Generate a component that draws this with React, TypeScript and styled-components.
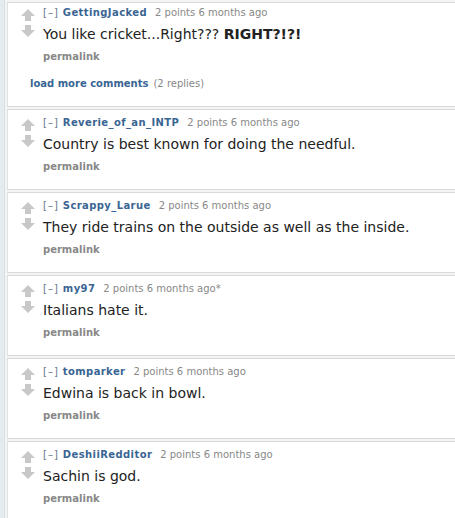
import React from 'react';
import styled, { createGlobalStyle } from 'styled-components';

const GlobalStyle = createGlobalStyle`
  html, body {
    margin: 0;
    padding: 0;
    background: #ffffff;
  }
  body {
    font-family: Verdana, "DejaVu Sans", sans-serif;
  }
`;

const Thread = styled.div`
  width: 455px;
  height: 518px;
  overflow: hidden;
  display: flex;
  background: #ffffff;
`;

const Rail = styled.div`
  width: 4px;
  flex: none;
  background: #e4ecef;
  border-right: 1px solid #d8e0e3;
`;

const List = styled.div`
  flex: 1;
  display: flex;
  flex-direction: column;
  gap: 2px;
  padding-top: 2px;
  padding-left: 2px;
  background: #f3f4f5;
`;

const Comment = styled.div<{ $first?: boolean }>`
  display: flex;
  background: #ffffff;
  border-top: 1px solid #d9d9d9;
  border-bottom: 1px solid #d9d9d9;
  border-left: 1px solid #e2e2e2;
  padding: ${(p) => (p.$first ? '3px' : '6px')} 0 15px 13px;
`;

const Votes = styled.div`
  width: 14px;
  flex: none;
  display: flex;
  flex-direction: column;
  align-items: center;
  gap: 4px;
  padding-top: 3px;
  margin-right: 8px;
`;

const Entry = styled.div`
  display: flex;
  flex-direction: column;
`;

const Tagline = styled.div`
  font-size: 10px;
  line-height: 14px;
  color: #888888;
  white-space: nowrap;
`;

const Expand = styled.span`
  color: #65758a;
  letter-spacing: 1px;
  margin-right: 4px;
`;

const Author = styled.span`
  color: #3a6593;
  font-weight: bold;
  letter-spacing: 0.4px;
  margin-right: 8px;
`;

const Body = styled.div`
  font-size: 14px;
  line-height: 20px;
  color: #222222;
  margin-top: 4px;
  white-space: nowrap;
`;

const Buttons = styled.div`
  font-size: 10px;
  line-height: 14px;
  font-weight: bold;
  color: #888888;
  margin-top: 6px;
`;

const MoreRow = styled.div`
  font-size: 10px;
  line-height: 14px;
  margin: 13px 0 0 -13px;
  color: #888888;
  white-space: nowrap;
`;

const MoreLink = styled.span`
  color: #3a6593;
  font-weight: bold;
  margin-right: 5px;
`;

const ArrowIcon = styled.svg<{ $down?: boolean }>`
  display: block;
  transform: ${(p) => (p.$down ? 'rotate(180deg)' : 'none')};
`;

const Arrow: React.FC<{ down?: boolean }> = ({ down }) => (
  <ArrowIcon $down={down} width="14" height="12" viewBox="0 0 14 12">
    <path d="M7 0 L14 7 L10 7 L10 12 L4 12 L4 7 L0 7 Z" fill="#c8c8c8" />
  </ArrowIcon>
);

type Item = {
  author: string;
  time: string;
  body: React.ReactNode;
  more?: string;
};

const comments: Item[] = [
  {
    author: 'GettingJacked',
    time: '6 months ago',
    body: (
      <>
        You like cricket...Right??? <b>RIGHT?!?!</b>
      </>
    ),
    more: '(2 replies)',
  },
  { author: 'Reverie_of_an_INTP', time: '6 months ago', body: 'Country is best known for doing the needful.' },
  { author: 'Scrappy_Larue', time: '6 months ago', body: 'They ride trains on the outside as well as the inside.' },
  { author: 'my97', time: '6 months ago*', body: 'Italians hate it.' },
  { author: 'tomparker', time: '6 months ago', body: 'Edwina is back in bowl.' },
  { author: 'DeshiiRedditor', time: '6 months ago', body: 'Sachin is god.' },
];

export default function App() {
  return (
    <>
      <GlobalStyle />
      <Thread>
        <Rail />
        <List>
          {comments.map((c, i) => (
            <Comment key={c.author} $first={i === 0}>
              <Votes>
                <Arrow />
                <Arrow down />
              </Votes>
              <Entry>
                <Tagline>
                  <Expand>[–]</Expand>
                  <Author>{c.author}</Author>2 points {c.time}
                </Tagline>
                <Body>{c.body}</Body>
                <Buttons>permalink</Buttons>
                {c.more && (
                  <MoreRow>
                    <MoreLink>load more comments</MoreLink>
                    {c.more}
                  </MoreRow>
                )}
              </Entry>
            </Comment>
          ))}
        </List>
      </Thread>
    </>
  );
}
